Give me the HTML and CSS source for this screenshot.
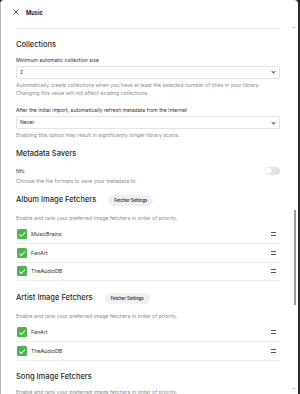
FILE: index.html
```html
<!DOCTYPE html>
<html lang="en">
<head>
    <meta charset="UTF-8">
    <title>Music</title>
    <link rel="stylesheet" href="styles.css">
</head>
<body>
<div class="dialog">
    <header class="dialog-header">
        <button class="close-btn" aria-label="Close">
            <svg width="6" height="6" viewBox="0 0 6 6"><path d="M0.5 0.5L5.5 5.5M5.5 0.5L0.5 5.5" stroke="#333" stroke-width="0.8" fill="none"/></svg>
        </button>
        <h1>Music</h1>
    </header>

    <div class="dialog-content">
        <h2 class="section-title first">Collections</h2>

        <div class="field">
            <label>Minimum automatic collection size</label>
            <div class="select">2<span class="chevron"></span></div>
            <p class="help">Automatically create collections when you have at least the selected number of titles in your library. Changing this value will not affect existing collections.</p>
        </div>

        <div class="field spaced">
            <label>After the initial import, automatically refresh metadata from the Internet</label>
            <div class="select">Never<span class="chevron"></span></div>
            <p class="help">Enabling this option may result in significantly longer library scans.</p>
        </div>

        <h2 class="section-title savers">Metadata Savers</h2>
        <div class="toggle-row">
            <span>Nfo</span>
            <span class="toggle"><span class="knob"></span></span>
        </div>
        <p class="help tight">Choose the file formats to save your metadata to.</p>

        <div class="fetcher-head album">
            <h2>Album Image Fetchers</h2>
            <button class="pill">Fetcher Settings</button>
        </div>
        <p class="help lead">Enable and rank your preferred image fetchers in order of priority.</p>
        <ul class="fetchers">
            <li><span class="check"></span><span class="name">MusicBrainz</span><span class="handle"></span></li>
            <li><span class="check"></span><span class="name">FanArt</span><span class="handle"></span></li>
            <li><span class="check"></span><span class="name">TheAudioDB</span><span class="handle"></span></li>
        </ul>

        <div class="fetcher-head">
            <h2>Artist Image Fetchers</h2>
            <button class="pill">Fetcher Settings</button>
        </div>
        <p class="help lead">Enable and rank your preferred image fetchers in order of priority.</p>
        <ul class="fetchers">
            <li><span class="check"></span><span class="name">FanArt</span><span class="handle"></span></li>
            <li><span class="check"></span><span class="name">TheAudioDB</span><span class="handle"></span></li>
        </ul>

        <h2 class="section-title song">Song Image Fetchers</h2>
        <p class="help song-help">Enable and rank your preferred image fetchers in order of priority.</p>
    </div>

    <div class="scrollbar">
        <span class="arrow up"></span>
        <span class="thumb"></span>
        <span class="arrow down"></span>
    </div>
</div>
</body>
</html>
```

FILE: styles.css
```css
html, body {
    margin: 0;
    padding: 0;
}

body {
    background-color: #2a2a2a;
    font-family: Inter, "Noto Sans", Arial, sans-serif;
    color: #333;
    width: 300px;
    height: 394px;
    overflow: hidden;
}

.dialog {
    position: relative;
    width: 297px;
    height: 397px;
    background: #fff;
    border-left: 1px solid #b5b5b5;
    border-radius: 4px;
    overflow: hidden;
}

.dialog-header {
    display: flex;
    align-items: center;
    height: 24px;
    padding-left: 10px;
    gap: 6px;
}

.close-btn {
    background: none;
    border: none;
    padding: 0;
    width: 9px;
    height: 9px;
    display: flex;
    align-items: center;
    justify-content: center;
}

.dialog-header h1 {
    font-size: 5.7px;
    font-weight: 700;
    margin: 0;
    color: #222;
}

.dialog-content {
    margin: 4px 18px 0 15px;
    border-top: 1px solid #e6e6e6;
}

h2 {
    font-size: 7.5px;
    font-weight: 500;
    line-height: 10px;
    margin: 0;
    color: #2b2b2b;
}

.section-title.first {
    margin-top: 10.5px;
}

.field label {
    display: block;
    font-size: 5.1px;
    line-height: 7px;
    margin-top: 7px;
    color: #333;
}

.field.spaced {
    margin-top: 10.5px;
}

.select {
    position: relative;
    margin-top: 2px;
    height: 11px;
    border: 0.6px solid #e3e3e3;
    border-radius: 2px;
    font-size: 5.1px;
    line-height: 11px;
    padding-left: 3px;
    color: #333;
}

.chevron {
    position: absolute;
    right: 4px;
    top: 3.5px;
    width: 2px;
    height: 2px;
    border-right: 0.7px solid #555;
    border-bottom: 0.7px solid #555;
    transform: rotate(45deg);
}

.help {
    font-size: 5.2px;
    line-height: 8px;
    color: #8c8c8c;
    margin: 2px 0 0;
}

.section-title.savers {
    margin-top: 9.5px;
}

.toggle-row {
    display: flex;
    justify-content: space-between;
    align-items: center;
    height: 10px;
    margin-top: 7px;
    font-size: 5.1px;
    color: #444;
}

.toggle {
    width: 15px;
    height: 8px;
    border-radius: 4px;
    background: #e4e4e4;
    display: flex;
    align-items: center;
    padding-left: 0.5px;
}

.knob {
    width: 7px;
    height: 7px;
    border-radius: 50%;
    background: #fff;
    box-shadow: 0 0 0.6px rgba(0, 0, 0, 0.35);
}

.help.tight {
    margin-top: 1px;
}

.fetcher-head {
    display: flex;
    align-items: center;
    gap: 12px;
    margin-top: 10.5px;
    height: 13px;
}

.fetcher-head.album {
    margin-top: 9px;
}

.pill {
    height: 11px;
    padding: 0 6px;
    border: none;
    border-radius: 6px;
    background: #f0f0f2;
    font-family: Inter, "Noto Sans", Arial, sans-serif;
    font-size: 4.2px;
    font-weight: 600;
    color: #333;
}

.help.lead {
    margin-top: 7px;
}

.fetchers {
    list-style: none;
    margin: 4px 0 0;
    padding: 0;
}

.fetchers li {
    display: flex;
    align-items: center;
    height: 17.5px;
    border-bottom: 1px solid #ececec;
    font-size: 5.3px;
    color: #333;
}

.check {
    position: relative;
    width: 10px;
    height: 10px;
    margin-left: 1px;
    border-radius: 1.5px;
    background: #4cb84c;
}

.check::after {
    content: "";
    position: absolute;
    left: 3.6px;
    top: 1.8px;
    width: 2px;
    height: 4.5px;
    border-right: 0.9px solid #fff;
    border-bottom: 0.9px solid #fff;
    transform: rotate(45deg);
}

.name {
    flex: 1;
    margin-left: 4px;
}

.handle {
    width: 5.5px;
    height: 1.6px;
    margin-right: 4px;
    border-top: 0.8px solid #555;
    border-bottom: 0.8px solid #555;
}

.section-title.song {
    margin-top: 11.5px;
}

.help.song-help {
    margin-top: 6px;
}

.scrollbar {
    position: absolute;
    top: 24px;
    right: 1px;
    width: 4px;
    bottom: 0;
}

.thumb {
    position: absolute;
    top: 186px;
    left: 0.5px;
    width: 2.5px;
    height: 95px;
    background: #9a9a9a;
}

.arrow {
    position: absolute;
    left: 0;
    width: 0;
    height: 0;
    border-left: 1.5px solid transparent;
    border-right: 1.5px solid transparent;
}

.arrow.up {
    top: 3px;
    border-bottom: 1.5px solid #777;
}

.arrow.down {
    top: 364px;
    border-top: 1.5px solid #777;
}
```
